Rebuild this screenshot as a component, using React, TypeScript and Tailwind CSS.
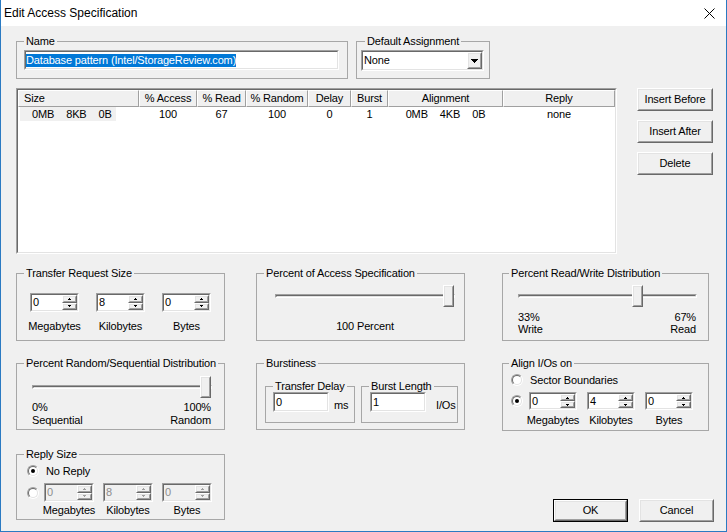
import React from "react";

type Kids = { className?: string; inner?: string; children?: React.ReactNode };

function Sunken({ className = "", inner = "", children }: Kids) {
  return (
    <div className={`border border-t-[#a0a0a0] border-l-[#a0a0a0] border-r-white border-b-white ${className}`}>
      <div className={`h-full w-full border border-t-[#696969] border-l-[#696969] border-r-[#e3e3e3] border-b-[#e3e3e3] ${inner}`}>
        {children}
      </div>
    </div>
  );
}

function Raised({ className = "", inner = "", children }: Kids) {
  return (
    <div className={`border border-t-white border-l-white border-r-[#696969] border-b-[#696969] bg-[#f0f0f0] ${className}`}>
      <div className={`h-full w-full border border-t-[#e3e3e3] border-l-[#e3e3e3] border-r-[#a0a0a0] border-b-[#a0a0a0] ${inner}`}>
        {children}
      </div>
    </div>
  );
}

function Group({
  label,
  className = "",
  lm = "ml-[7px]",
  children,
}: {
  label: string;
  className?: string;
  lm?: string;
  children?: React.ReactNode;
}) {
  return (
    <fieldset className={`min-w-0 shrink-0 border border-[#a7a7a7] ${className}`}>
      <legend className={`${lm} px-[2px] leading-[13px]`}>{label}</legend>
      {children}
    </fieldset>
  );
}

function Arrow({ up, color }: { up: boolean; color: string }) {
  return (
    <svg width="3" height="2" viewBox="0 0 3 2" className="block" shapeRendering="crispEdges">
      {up ? (
        <>
          <rect x="1" y="0" width="1" height="1" fill={color} />
          <rect x="0" y="1" width="3" height="1" fill={color} />
        </>
      ) : (
        <>
          <rect x="0" y="0" width="3" height="1" fill={color} />
          <rect x="1" y="1" width="1" height="1" fill={color} />
        </>
      )}
    </svg>
  );
}

function Spin({
  value,
  className = "",
  disabled = false,
}: {
  value: string;
  className?: string;
  disabled?: boolean;
}) {
  const c = disabled ? "#a0a0a0" : "#000000";
  return (
    <Sunken className={className} inner={`flex ${disabled ? "bg-[#f0f0f0]" : "bg-white"}`}>
      <div className={`min-w-0 flex-1 pl-[1px] leading-[14px] ${disabled ? "text-[#8d8d8d]" : "text-black"}`}>
        {value}
      </div>
      <div className="flex w-[15px] flex-col">
        <Raised className="min-h-0 flex-1" inner="flex items-center justify-center">
          <Arrow up color={c} />
        </Raised>
        <Raised className="min-h-0 flex-1" inner="flex items-center justify-center">
          <Arrow up={false} color={c} />
        </Raised>
      </div>
    </Sunken>
  );
}

function Radio({ checked = false }: { checked?: boolean }) {
  return (
    <div className="h-[12px] w-[12px] shrink-0 rounded-full border border-t-[#a0a0a0] border-l-[#a0a0a0] border-r-white border-b-white">
      <div className="flex h-full w-full items-center justify-center rounded-full border border-t-[#696969] border-l-[#696969] border-r-[#e3e3e3] border-b-[#e3e3e3] bg-white">
        {checked && <div className="h-[4px] w-[4px] rounded-full bg-black" />}
      </div>
    </div>
  );
}

function Slider({ w, thumb }: { w: string; thumb: string }) {
  return (
    <div className={`relative flex h-[22px] items-center ${w}`}>
      <Sunken className="h-[4px] w-full" />
      <Raised className={`absolute top-0 h-[22px] w-[11px] ${thumb}`} />
    </div>
  );
}

function Button({ label, className = "" }: { label: string; className?: string }) {
  return (
    <Raised className={`h-[23px] ${className}`} inner="flex items-center justify-center">
      {label}
    </Raised>
  );
}

const cols = "grid grid-cols-[121px_58px_49px_62px_43px_37px_115px_112px]";
const headers = ["Size", "% Access", "% Read", "% Random", "Delay", "Burst", "Alignment", "Reply"];

export default function App() {
  return (
    <div className="flex h-[532px] w-[727px] flex-col overflow-hidden border-x border-b border-[#2a7ac2] bg-[#f0f0f0] font-['Liberation_Sans',Arial,sans-serif] text-[11px] tracking-[-0.15px] text-black">
      {/* Title bar */}
      <div className="flex h-[26px] shrink-0 items-center justify-between bg-white pl-[3px] pr-[11px]">
        <span className="text-[12px] tracking-normal">Edit Access Specification</span>
        <svg width="11" height="11" viewBox="0 0 11 11">
          <path d="M0.5 0.5 L10.5 10.5 M10.5 0.5 L0.5 10.5" stroke="#000" strokeWidth="1" />
        </svg>
      </div>

      <div className="flex flex-col pl-[15px]">
        {/* Row 1 */}
        <div className="mt-[9px] flex">
          <Group label="Name" className="h-[44px] w-[332px]">
            <Sunken className="ml-[7px] mt-[2px] h-[20px] w-[315px]" inner="flex items-center bg-white">
              <span className="bg-[#0078d7] leading-[13px] text-white">Database pattern (Intel/StorageReview.com)</span>
            </Sunken>
          </Group>
          <Group label="Default Assignment" lm="ml-[8px]" className="ml-[8px] h-[44px] w-[134px]">
            <Sunken className="ml-[4px] mt-[2px] h-[21px] w-[123px]" inner="flex bg-white">
              <div className="flex-1 pl-[1px] leading-[17px]">None</div>
              <Raised className="h-full w-[15px]" inner="flex items-center justify-center">
                <svg width="7" height="4" viewBox="0 0 7 4" shapeRendering="crispEdges">
                  <polygon points="0,0 7,0 3.5,4" fill="#000" />
                </svg>
              </Raised>
            </Sunken>
          </Group>
        </div>

        {/* Row 2: list + buttons */}
        <div className="mt-[9px] flex">
          <Sunken className="h-[166px] w-[601px] shrink-0" inner="overflow-hidden bg-white">
            <div className={cols}>
              {headers.map((h, i) => (
                <div
                  key={h}
                  className={`h-[17px] border border-t-white border-l-white border-r-[#a0a0a0] border-b-[#a0a0a0] bg-[#f0f0f0] leading-[15px] ${
                    i === 0 ? "pl-[5px] text-left" : "text-center"
                  }`}
                >
                  {h}
                </div>
              ))}
            </div>
            <div className={`${cols} h-[14px] leading-[14px]`}>
              <div>
                <div className="ml-[2px] flex h-[14px] w-[96px] gap-[12px] bg-[#f0f0f0] pl-[12px]">
                  <span>0MB</span>
                  <span>8KB</span>
                  <span>0B</span>
                </div>
              </div>
              <div className="text-center">100</div>
              <div className="text-center">67</div>
              <div className="text-center">100</div>
              <div className="text-center">0</div>
              <div className="text-center">1</div>
              <div className="flex justify-center gap-[12px]">
                <span>0MB</span>
                <span>4KB</span>
                <span>0B</span>
              </div>
              <div className="text-center">none</div>
            </div>
          </Sunken>
          <div className="ml-[20px] flex flex-col gap-[9px]">
            <Button label="Insert Before" className="w-[76px]" />
            <Button label="Insert After" className="w-[76px]" />
            <Button label="Delete" className="w-[76px]" />
          </div>
        </div>

        {/* Row 3 */}
        <div className="mt-[13px] flex">
          <Group label="Transfer Request Size" className="h-[74px] w-[209px]">
            <div className="ml-[13px] mt-[13px] flex gap-[17px]">
              {[
                ["0", "Megabytes"],
                ["8", "Kilobytes"],
                ["0", "Bytes"],
              ].map(([v, l], i) => (
                <div key={i} className="flex w-[49px] flex-col items-center">
                  <Spin value={v} className="h-[19px] w-[49px]" />
                  <div className="mt-[8px] whitespace-nowrap leading-[13px]">{l}</div>
                </div>
              ))}
            </div>
          </Group>
          <Group label="Percent of Access Specification" className="ml-[31px] h-[74px] w-[209px]">
            <div className="ml-[18px] mt-[5px] w-[180px]">
              <Slider w="w-[180px]" thumb="left-[168px]" />
              <div className="mt-[13px] text-center leading-[13px]">100 Percent</div>
            </div>
          </Group>
          <Group label="Percent Read/Write Distribution" lm="ml-[6px]" className="ml-[37px] h-[74px] w-[207px]">
            <div className="ml-[15px] mt-[5px] w-[179px]">
              <Slider w="w-[179px]" thumb="left-[114px]" />
              <div className="mt-[4px] flex justify-between leading-[12px]">
                <div>
                  33%
                  <br />
                  Write
                </div>
                <div className="pr-[1px] text-right">
                  67%
                  <br />
                  Read
                </div>
              </div>
            </div>
          </Group>
        </div>

        {/* Row 4 */}
        <div className="mt-[16px] flex">
          <Group label="Percent Random/Sequential Distribution" className="h-[73px] w-[209px]">
            <div className="ml-[15px] mt-[6px] w-[180px]">
              <Slider w="w-[180px]" thumb="left-[168px]" />
              <div className="mt-[3px] flex justify-between leading-[13px]">
                <div>
                  0%
                  <br />
                  Sequential
                </div>
                <div className="pr-[1px] text-right">
                  100%
                  <br />
                  Random
                </div>
              </div>
            </div>
          </Group>
          <Group label="Burstiness" className="ml-[31px] h-[73px] w-[209px]">
            <div className="ml-[8px] mt-[10px] flex gap-[6px]">
              <Group label="Transfer Delay" className="h-[43px] w-[90px]">
                <div className="-mt-[1px] ml-[7px] flex items-end">
                  <Sunken className="h-[20px] w-[56px]" inner="bg-white pl-[1px] leading-[16px]">
                    0
                  </Sunken>
                  <span className="ml-[5px] leading-[13px]">ms</span>
                </div>
              </Group>
              <Group label="Burst Length" className="h-[43px] w-[97px]">
                <div className="-mt-[1px] ml-[8px] flex items-end">
                  <Sunken className="h-[20px] w-[56px]" inner="bg-white pl-[1px] leading-[16px]">
                    1
                  </Sunken>
                  <span className="ml-[10px] leading-[13px]">I/Os</span>
                </div>
              </Group>
            </div>
          </Group>
          <Group label="Align I/Os on" lm="ml-[6px]" className="ml-[37px] h-[74px] w-[207px]">
            <div className="ml-[8px] mt-[3px] flex h-[14px] items-center">
              <Radio />
              <span className="ml-[7px]">Sector Boundaries</span>
            </div>
            <div className="ml-[8px] mt-[5px] flex">
              <div className="flex h-[18px] items-center">
                <Radio checked />
              </div>
              <div className="ml-[6px] flex gap-[10px]">
                {[
                  ["0", "Megabytes"],
                  ["4", "Kilobytes"],
                  ["0", "Bytes"],
                ].map(([v, l], i) => (
                  <div key={i} className="flex w-[48px] flex-col items-center">
                    <Spin value={v} className="h-[18px] w-[48px]" />
                    <div className="mt-[4px] whitespace-nowrap leading-[13px]">{l}</div>
                  </div>
                ))}
              </div>
            </div>
          </Group>
        </div>

        {/* Row 5 */}
        <div className="mt-[17px] flex">
          <Group label="Reply Size" className="h-[72px] w-[209px]">
            <div className="ml-[10px] mt-[3px] flex h-[14px] items-center">
              <Radio checked />
              <span className="ml-[7px]">No Reply</span>
            </div>
            <div className="ml-[10px] mt-[5px] flex">
              <div className="flex h-[19px] items-center">
                <Radio />
              </div>
              <div className="ml-[5px] flex gap-[9px]">
                {[
                  ["0", "Megabytes"],
                  ["8", "Kilobytes"],
                  ["0", "Bytes"],
                ].map(([v, l], i) => (
                  <div key={i} className="flex w-[50px] flex-col items-center">
                    <Spin value={v} disabled className="h-[19px] w-[50px]" />
                    <div className="mt-[2px] whitespace-nowrap leading-[13px]">{l}</div>
                  </div>
                ))}
              </div>
            </div>
          </Group>
          <div className="ml-[328px] mt-[51px] flex gap-[11px]">
            <div className="h-[23px] w-[75px] border border-black">
              <Raised className="h-full w-full" inner="flex items-center justify-center">
                OK
              </Raised>
            </div>
            <Button label="Cancel" className="w-[75px]" />
          </div>
        </div>
      </div>
    </div>
  );
}
